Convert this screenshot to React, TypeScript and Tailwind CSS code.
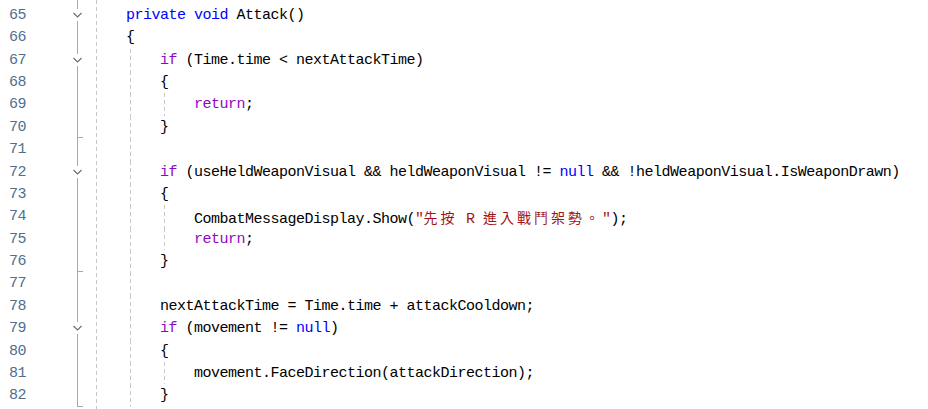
import React from "react";

type Tok = [string, string];

const C = {
  k: "text-[#0000ff]",
  c: "text-[#8f08c4]",
  s: "text-[#a31515]",
  p: "text-black",
};

type Line = { n: number; indent: number; fold?: "open" | "end"; toks: Tok[] };

const STR: Tok[] = [
  ["s", '"'],
  ["j", "先按"],
  ["s", " R "],
  ["j", "進入戰鬥架勢。"],
  ["s", '"'],
];

const lines: Line[] = [
  { n: 65, indent: 0, fold: "open", toks: [["k", "private"], ["p", " "], ["k", "void"], ["p", " Attack()"]] },
  { n: 66, indent: 0, toks: [["p", "{"]] },
  { n: 67, indent: 1, fold: "open", toks: [["c", "if"], ["p", " (Time.time < nextAttackTime)"]] },
  { n: 68, indent: 1, toks: [["p", "{"]] },
  { n: 69, indent: 2, toks: [["c", "return"], ["p", ";"]] },
  { n: 70, indent: 1, fold: "end", toks: [["p", "}"]] },
  { n: 71, indent: 1, toks: [] },
  {
    n: 72,
    indent: 1,
    fold: "open",
    toks: [
      ["c", "if"],
      ["p", " (useHeldWeaponVisual && heldWeaponVisual != "],
      ["k", "null"],
      ["p", " && !heldWeaponVisual.IsWeaponDrawn)"],
    ],
  },
  { n: 73, indent: 1, toks: [["p", "{"]] },
  { n: 74, indent: 2, toks: [["p", "CombatMessageDisplay.Show("], ...STR, ["p", ");"]] },
  { n: 75, indent: 2, toks: [["c", "return"], ["p", ";"]] },
  { n: 76, indent: 1, fold: "end", toks: [["p", "}"]] },
  { n: 77, indent: 1, toks: [] },
  { n: 78, indent: 1, toks: [["p", "nextAttackTime = Time.time + attackCooldown;"]] },
  { n: 79, indent: 1, fold: "open", toks: [["c", "if"], ["p", " (movement != "], ["k", "null"], ["p", ")"]] },
  { n: 80, indent: 1, toks: [["p", "{"]] },
  { n: 81, indent: 2, toks: [["p", "movement.FaceDirection(attackDirection);"]] },
  { n: 82, indent: 1, fold: "end", toks: [["p", "}"]] },
];

const mono = "font-['Liberation_Mono',monospace] text-[15px] tracking-[-0.5px]";
const dashed =
  "bg-[repeating-linear-gradient(to_bottom,#c8c8c8_0px,#c8c8c8_4px,transparent_4px,transparent_7px)]";

function FoldCell({ fold }: { fold?: "open" | "end" }) {
  if (fold === "open") {
    return (
      <div className="h-[22.4px] flex flex-col">
        <div className="ml-[5px] w-px flex-1 bg-[#a8a8a8]" />
        <svg width="11" height="12" viewBox="0 0 11 12" className="shrink-0">
          <path d="M1.5 4 L5.5 8 L9.5 4" fill="none" stroke="#6a6a6a" strokeWidth="1.1" />
        </svg>
        <div className="ml-[5px] w-px flex-1 bg-[#a8a8a8]" />
      </div>
    );
  }
  if (fold === "end") {
    return (
      <div className="h-[22.4px] flex flex-col">
        <div className="ml-[5px] w-px flex-1 bg-[#a8a8a8]" />
        <div className="ml-[5px] w-[6px] h-px bg-[#a8a8a8]" />
      </div>
    );
  }
  return (
    <div className="h-[22.4px] flex flex-col">
      <div className="ml-[5px] w-px flex-1 bg-[#a8a8a8]" />
    </div>
  );
}

function CodeLine({ line }: { line: Line }) {
  const guides = Array.from({ length: line.indent });
  return (
    <div className="h-[22.4px] flex items-stretch">
      {guides.map((_, i) => (
        <div key={i} className="w-[34px] shrink-0 pl-[4px]">
          <div className={`w-px h-full ${dashed}`} />
        </div>
      ))}
      <div className={`${mono} leading-[22.4px] pt-px whitespace-pre`}>
        {line.toks.map(([t, s], i) =>
          t === "j" ? (
            <span
              key={i}
              className="text-[#a31515] font-['Noto_Sans_CJK_TC',sans-serif] text-[14px] tracking-[3px]"
            >
              {s}
            </span>
          ) : (
            <span key={i} className={C[t as keyof typeof C]}>
              {s}
            </span>
          )
        )}
      </div>
    </div>
  );
}

export default function App() {
  return (
    <div className="w-[928px] h-[409px] overflow-hidden bg-white flex">
      {/* line numbers */}
      <div className="w-[26px] shrink-0 flex flex-col">
        <div className="h-[3.8px]" />
        {lines.map((l) => (
          <div
            key={l.n}
            className={`h-[22.4px] leading-[22.4px] pt-px text-right text-[#4f6f8f] ${mono}`}
          >
            {l.n}
          </div>
        ))}
      </div>

      {/* outlining margin */}
      <div className="ml-[46px] w-[11px] shrink-0 flex flex-col">
        <div className="h-[3.8px] flex">
          <div className="ml-[5px] w-px bg-[#a8a8a8]" />
        </div>
        {lines.map((l) => (
          <FoldCell key={l.n} fold={l.fold} />
        ))}
      </div>

      {/* separator */}
      <div className={`ml-[13px] w-px shrink-0 h-full ${dashed}`} />

      {/* code */}
      <div className="flex-1 pl-[29px] flex flex-col">
        <div className="h-[3.8px]" />
        {lines.map((l) => (
          <CodeLine key={l.n} line={l} />
        ))}
      </div>
    </div>
  );
}
